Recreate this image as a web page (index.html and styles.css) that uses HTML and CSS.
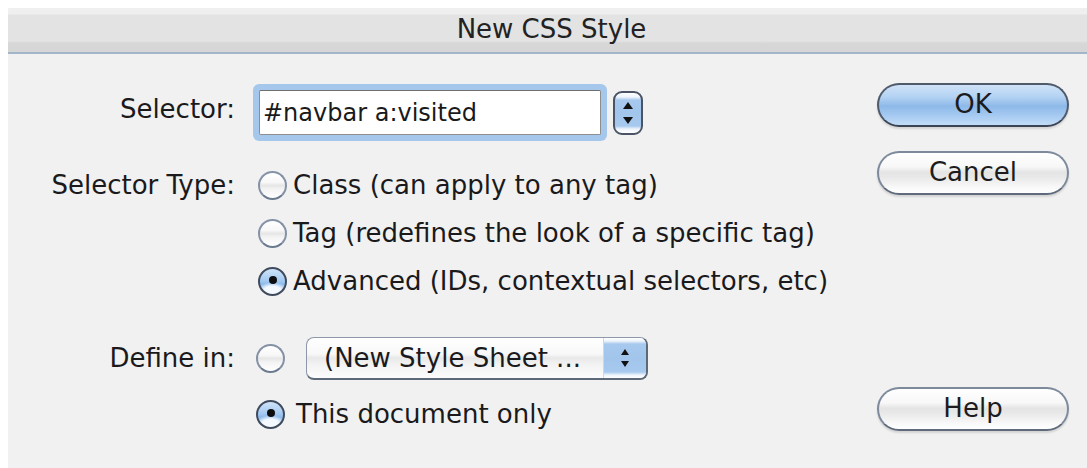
FILE: index.html
```html
<!DOCTYPE html>
<html lang="en">
<head>
<meta charset="utf-8">
<title>New CSS Style</title>
<link rel="stylesheet" href="styles.css">
</head>
<body>
<div class="dialog">
  <div class="titlebar"><span class="title">New CSS Style</span></div>
  <div class="content">
    <div class="form">
      <div class="row row-selector">
        <div class="label">Selector:</div>
        <div class="field">#navbar a:visited</div>
        <div class="stepper"><span class="arrow up"></span><span class="arrow down"></span></div>
      </div>

      <div class="row row-type">
        <div class="label label-first">Selector Type:</div>
        <div class="options">
          <div class="option"><span class="radio"></span>Class (can apply to any tag)</div>
          <div class="option"><span class="radio"></span>Tag (redefines the look of a specific tag)</div>
          <div class="option"><span class="radio on"></span>Advanced (IDs, contextual selectors, etc)</div>
        </div>
      </div>

      <div class="row row-define">
        <div class="label">Define in:</div>
        <span class="radio shifted"></span>
        <div class="popup">
          <span class="popup-text">(New Style Sheet ...</span>
          <span class="popup-arrows"><span class="arrow up small"></span><span class="arrow down small"></span></span>
        </div>
      </div>

      <div class="row row-doc">
        <div class="label"></div>
        <div class="option"><span class="radio on shifted"></span>This document only</div>
      </div>
    </div>

    <div class="actions">
      <button class="btn btn-default" type="button">OK</button>
      <button class="btn" type="button">Cancel</button>
      <button class="btn btn-help" type="button">Help</button>
    </div>
  </div>
</div>
</body>
</html>
```

FILE: styles.css
```css
html, body {
  margin: 0;
  background: #ffffff;
}

body {
  padding: 8px 0 0 8px;
  font-family: "DejaVu Sans", "Liberation Sans", sans-serif;
  color: #1a1a1c;
}

.dialog {
  width: 1079px;
  height: 460px;
  background: #f1f1f1;
  display: flex;
  flex-direction: column;
}

/* window title bar */
.titlebar {
  height: 44px;
  flex: none;
  border-bottom: 2px solid #a3b5c8;
  border-top-left-radius: 6px;
  background: linear-gradient(#efefef 0, #efefef 6px, #e3e3e3 7px, #e3e3e3 33px, #d7d7d7 35px, #d6d6d6 100%);
  display: flex;
  align-items: center;
  justify-content: center;
}

.title {
  font-size: 26px;
  color: #222;
  padding-left: 8px;
  padding-bottom: 2px;
}

.content {
  flex: 1;
  display: flex;
  padding-top: 29px;
}

.form {
  flex: 1;
  font-size: 26px;
}

.row {
  display: flex;
  align-items: center;
}

.label {
  width: 227px;
  flex: none;
  text-align: right;
  margin-right: 17px;
}

/* selector text field with focus ring */
.row-selector {
  height: 59px;
}

.row-selector .label {
  padding-bottom: 7px;
}

.field {
  margin-left: 7px;
  width: 337px;
  height: 43px;
  box-sizing: content-box;
  border: 1px solid #8e8e8e;
  border-top-color: #6f6f6f;
  background: #fff;
  box-shadow: 0 0 0 6px #a5c7ec;
  border-radius: 2px;
  padding-left: 3px;
  display: flex;
  align-items: center;
  font-size: 24px;
  color: #1a1a1a;
}

.stepper {
  margin-left: 12px;
  width: 30px;
  height: 44px;
  box-sizing: border-box;
  border: 2px solid #4a5465;
  border-radius: 9px;
  background: linear-gradient(#ffffff 0, #eef4fb 4px, #a7c9ee 7px, #a2c5ec 50%, #a7c9ee calc(100% - 7px), #eef4fb calc(100% - 4px), #ffffff 100%);
  display: flex;
  flex-direction: column;
  align-items: center;
  justify-content: center;
  gap: 8px;
}

.arrow {
  width: 0;
  height: 0;
  border-left: 5px solid transparent;
  border-right: 5px solid transparent;
}

.arrow.up {
  border-bottom: 7px solid #111;
}

.arrow.down {
  border-top: 7px solid #111;
}

.arrow.small {
  border-left-width: 4px;
  border-right-width: 4px;
}

.arrow.small.up { border-bottom-width: 6px; }
.arrow.small.down { border-top-width: 6px; }

/* radio group */
.row-type {
  margin-top: 19px;
  align-items: flex-start;
}

.label-first {
  height: 48px;
  line-height: 48px;
}

.options {
  display: flex;
  flex-direction: column;
}

.option {
  height: 48px;
  display: flex;
  align-items: center;
  gap: 6px;
  margin-left: 6px;
  white-space: nowrap;
}

.radio {
  width: 29px;
  height: 29px;
  flex: none;
  box-sizing: border-box;
  border-radius: 50%;
  border: 2px solid #8592a6;
  border-bottom-color: #6c7a90;
  background: linear-gradient(#ffffff 0%, #f7f7f7 38%, #e6e6e6 50%, #f3f3f3 64%, #ffffff 100%);
  position: relative;
}

.radio.on {
  border-color: #3f4b5d;
  background:
    radial-gradient(ellipse 60% 35% at 50% 88%, #f4f9ff 0 55%, transparent 100%),
    linear-gradient(#cfe3f8 0%, #a6cbf1 45%, #8fbbea 60%, #a9cff4 100%);
}

.radio.on::after {
  content: "";
  position: absolute;
  left: 50%;
  top: 50%;
  width: 8px;
  height: 8px;
  margin: -5px 0 0 -4px;
  border-radius: 50%;
  background: #0e0e0e;
}

/* define-in row */
.row-define {
  margin-top: 31px;
  height: 44px;
}

.radio.shifted {
  margin-left: 4px;
}

.popup {
  margin-left: 21px;
  width: 342px;
  height: 43px;
  box-sizing: border-box;
  border: 1px solid #8d99aa;
  border-bottom: 2px solid #5d6878;
  border-right: 2px solid #5d6878;
  border-radius: 8px;
  background: linear-gradient(#ffffff 0%, #f8f8f8 40%, #e8e8e8 50%, #f2f2f2 65%, #fcfcfc 100%);
  display: flex;
  align-items: stretch;
  overflow: hidden;
}

.popup-text {
  flex: 1;
  display: flex;
  align-items: center;
  padding-left: 17px;
  white-space: nowrap;
}

.popup-arrows {
  width: 42px;
  flex: none;
  background: linear-gradient(#ffffff 0, #eef4fb 3px, #a7c9ee 6px, #a2c5ec 50%, #a7c9ee calc(100% - 6px), #eef4fb calc(100% - 3px), #ffffff 100%);
  border-left: 1px solid #c9d9ea;
  display: flex;
  flex-direction: column;
  align-items: center;
  justify-content: center;
  gap: 6px;
}

.row-doc {
  margin-top: 12px;
  height: 44px;
}

.row-doc .label {
  margin-right: 0;
}

.row-doc .option {
  margin-left: 0;
  gap: 11px;
}

.row-doc .radio.shifted {
  margin-left: 21px;
}

/* push buttons */
.actions {
  width: 192px;
  flex: none;
  margin-right: 18px;
  padding-bottom: 37px;
  display: flex;
  flex-direction: column;
}

.btn {
  width: 192px;
  height: 44px;
  box-sizing: border-box;
  border-radius: 22px;
  border: 2px solid #7d8a9c;
  border-bottom-color: #5f6b7c;
  background: linear-gradient(#ffffff 0%, #f7f7f7 35%, #e4e4e4 48%, #e8e8e8 60%, #f8f8f8 85%, #ffffff 100%);
  box-shadow: 0 2px 2px rgba(0, 0, 0, 0.12);
  font-family: inherit;
  font-size: 26px;
  line-height: 1;
  color: #1c1c1e;
  padding: 0 0 3px;
  margin: 0;
}

.btn + .btn {
  margin-top: 24px;
}

.btn-default {
  border-color: #4f5a6b;
  border-bottom-color: #3a4454;
  background: linear-gradient(#cfe2f7 0%, #b3d2f3 30%, #98c0ec 47%, #8db8e8 52%, #a4c9f1 75%, #c2dcf7 100%);
}

.btn-help {
  margin-top: auto !important;
}
```
